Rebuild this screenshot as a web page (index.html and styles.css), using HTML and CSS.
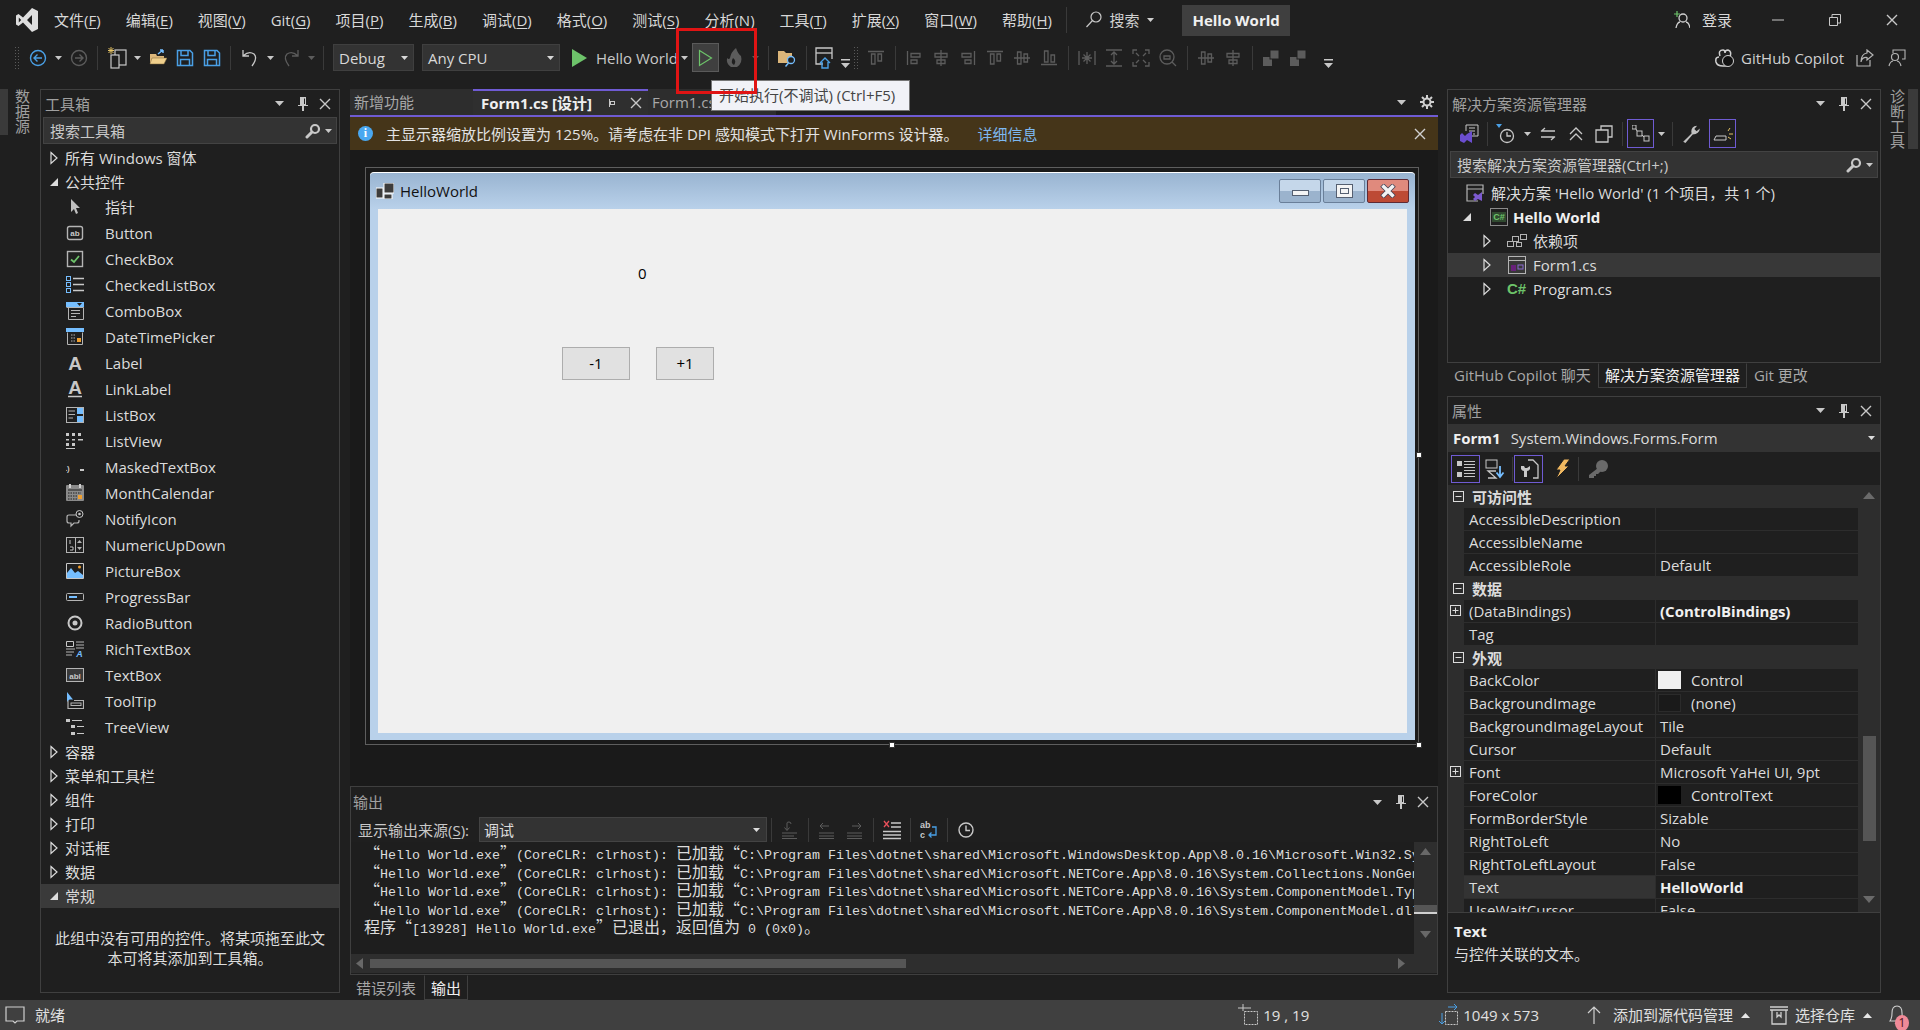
FILE: index.html
```html
<!DOCTYPE html>
<html lang="zh-CN">
<head>
    <meta charset="UTF-8">
    <title>Hello World - Microsoft Visual Studio</title>
    <link rel="stylesheet" href="styles.css">
</head>
<body>
<svg class="sprite" xmlns="http://www.w3.org/2000/svg">
    <symbol id="tri-open" viewBox="0 0 8 14"><path d="M1 1.5 7 7 1 12.5Z" fill="none" stroke="currentColor" stroke-width="1.2"/></symbol>
    <symbol id="tri-down" viewBox="0 0 8 14"><path d="M0 11 8 3V11Z" fill="currentColor"/></symbol>
    <symbol id="caret" viewBox="0 0 9 5"><path d="M0 0H9L4.500 5Z" fill="currentColor"/></symbol>
    <symbol id="pin" viewBox="0 0 12 16"><path d="M3 1H9V9H11V10H7V15H5V10H1V9H3ZM7 2.500V8H8V2.500Z" fill="currentColor"/></symbol>
    <symbol id="close" viewBox="0 0 12 12"><path d="M1 1 11 11M11 1 1 11" stroke="currentColor" stroke-width="1.400" fill="none"/></symbol>
    <symbol id="find" viewBox="0 0 16 16"><circle cx="10" cy="6" r="4" fill="none" stroke="currentColor" stroke-width="2.200"/><path d="M7 9 2 14" stroke="currentColor" stroke-width="3" stroke-linecap="round"/></symbol>
    <symbol id="folder" viewBox="0 0 18 18"><path d="M1 5H7L8 7H15V15H1Z" fill="#dcb67a"/><path d="M3 9H18L15 15H1Z" fill="#f0cf8c" stroke="#7a6236" stroke-width=".5"/><path d="M9 5 14 1M14 1H11M14 1V4" stroke="#75beff" stroke-width="1.500" fill="none"/></symbol>
    <symbol id="save" viewBox="0 0 18 18"><path d="M1.500 1.500H14L16.500 4V16.500H1.500Z" fill="none" stroke="#4aa0e6" stroke-width="1.500"/><path d="M5 2V6.500H12V2M4.500 16V10.500H13.500V16" fill="none" stroke="#4aa0e6" stroke-width="1.500"/></symbol>
    <symbol id="ab" viewBox="0 0 18 18"><rect x="1.500" y="2.500" width="15" height="13" rx="2" fill="none" stroke="#b4b4b4" stroke-width="1.400"/><text x="9" y="12" class="ico-t">ab</text></symbol>
    <symbol id="chk" viewBox="0 0 18 18"><rect x="1.500" y="1.500" width="15" height="15" fill="none" stroke="#b4b4b4" stroke-width="1.400"/><path d="M5 9.500 8 12 13 6" fill="none" stroke="#6dc36a" stroke-width="1.800"/></symbol>
    <symbol id="chklist" viewBox="0 0 18 18"><g fill="none" stroke="#75beff"><rect x=".5" y=".5" width="4" height="4"/><rect x=".5" y="6.500" width="4" height="4"/><rect x=".5" y="12.500" width="4" height="4"/></g><path d="M7 2.500H18M7 8.500H18M7 14.500H18" stroke="#c8c8c8" stroke-width="1.500"/></symbol>
    <symbol id="combo" viewBox="0 0 18 18"><path d="M.5 5.500H17.500V17.500H2.500V5.500" fill="none" stroke="#b4b4b4"/><path d="M0 0H18V5H0Z" fill="#75beff"/><path d="M5 8.500H14M5 11.500H14M5 14.500H10" stroke="#b4b4b4"/><path d="M11 1H16L13.500 4Z" fill="#1f1f1f"/></symbol>
    <symbol id="datet" viewBox="0 0 18 18"><path d="M1.500 4.500V16.500H16.500V4.500" fill="none" stroke="#b4b4b4"/><path d="M0 0H18V4H0Z" fill="#75beff"/><path d="M5 7H10M5 10H10M5 13H10" stroke="#b4b4b4" stroke-dasharray="1.500 1"/><rect x="11" y="10" width="4" height="4" fill="#f0a030"/></symbol>
    <symbol id="glyphA" viewBox="0 0 18 18"><text x="9" y="15.500" class="ico-a">A</text></symbol>
    <symbol id="glyphAl" viewBox="0 0 18 18"><text x="9" y="13.500" class="ico-a">A</text><path d="M2 16.500H16" stroke="#c8c8c8" stroke-width="1.500"/></symbol>
    <symbol id="listb" viewBox="0 0 18 18"><rect x=".5" y="1.500" width="17" height="15" fill="none" stroke="#b4b4b4"/><path d="M2.500 5H9M2.500 8.500H9M2.500 12H7" stroke="#b4b4b4"/><rect x="11" y="2" width="6" height="6" fill="#75beff"/><rect x="11" y="10" width="6" height="6" fill="#75beff"/></symbol>
    <symbol id="listv" viewBox="0 0 18 18"><g fill="#c8c8c8"><rect x="0" y="1" width="3" height="3"/><rect x="6" y="1" width="3" height="3"/><rect x="12" y="1" width="3" height="3"/><rect x="0" y="7" width="3" height="1.500"/><rect x="6" y="7" width="3" height="1.500"/><rect x="12" y="7" width="5" height="1.500"/><rect x="0" y="11" width="3" height="3"/><rect x="6" y="11" width="3" height="3"/><rect x="0" y="16" width="9" height="1"/></g></symbol>
    <symbol id="masked" viewBox="0 0 18 18"><text x="0" y="13" class="ico-t">(.)</text><rect x="14" y="11" width="4" height="2" fill="#c8c8c8"/></symbol>
    <symbol id="cal" viewBox="0 0 18 18"><rect y="1" width="18" height="16" rx="1" fill="#8a8a8a"/><path d="M2 6H16" stroke="#1f1f1f"/><path d="M2 9H15M2 12H15M2 15H11" stroke="#1f1f1f" stroke-dasharray="1.500 1"/><rect x="3" y="0" width="2" height="4" fill="#d0d0d0"/><rect x="13" y="0" width="2" height="4" fill="#d0d0d0"/><rect x="12" y="11" width="4" height="4" fill="#f0a030"/></symbol>
    <symbol id="notify" viewBox="0 0 18 18"><path d="M10 5H3Q1 5 1 7V11Q1 13 3 13H5V16L8 13H11Q13 13 13 11V10" fill="none" stroke="#b4b4b4" stroke-width="1.200"/><circle cx="13.500" cy="4" r="3.500" fill="none" stroke="#c8c8c8"/><circle cx="13.500" cy="4" r="1.300" fill="#c8c8c8"/></symbol>
    <symbol id="num" viewBox="0 0 18 18"><rect x=".5" y="1.500" width="17" height="15" fill="none" stroke="#b4b4b4"/><path d="M4 4V8M4 11H7V14H4" stroke="#c8c8c8"/><path d="M9.500 2V16" stroke="#b4b4b4"/><path d="M11 7H16L13.500 4ZM11 11H16L13.500 14Z" fill="#b4b4b4"/></symbol>
    <symbol id="pic" viewBox="0 0 18 18"><path d="M.5 1.500H17.500V16.500H.5Z" fill="#1f1f1f" stroke="#c8c8c8"/><path d="M1 16V11L5 6 9 11 12 9 17 13V16Z" fill="#75beff"/><circle cx="13.500" cy="5" r="1.500" fill="#f0a030"/></symbol>
    <symbol id="prog" viewBox="0 0 18 18"><rect x=".5" y="5.500" width="17" height="7" rx="1" fill="none" stroke="#b4b4b4"/><rect x="3" y="8" width="8" height="2" fill="#75beff"/></symbol>
    <symbol id="radio" viewBox="0 0 18 18"><circle cx="9" cy="9" r="6.500" fill="none" stroke="#c8c8c8" stroke-width="2"/><circle cx="9" cy="9" r="2.500" fill="#c8c8c8"/></symbol>
    <symbol id="rich" viewBox="0 0 18 18"><path d="M.5 1.500H7.500V6.500H.5Z" fill="none" stroke="#c8c8c8"/><path d="M10 2H18M10 5H18M10 8H18M0 9H9M0 12H8M0 15H6" stroke="#b4b4b4"/><text x="13.500" y="17" class="ico-b">A</text></symbol>
    <symbol id="abl" viewBox="0 0 18 18"><rect x=".5" y="2.500" width="17" height="13" fill="#3a3a3a" stroke="#b4b4b4"/><text x="9" y="12.500" class="ico-t">abl</text></symbol>
    <symbol id="tip" viewBox="0 0 18 18"><path d="M1 0V10L3.500 7.500H7Z" fill="#75beff"/><path d="M2 8.500V16.500H17.500V8.500H8" fill="none" stroke="#b4b4b4" stroke-width="1.200"/><rect x="5" y="11" width="10" height="2.500" fill="none" stroke="#b4b4b4"/></symbol>
    <symbol id="tree" viewBox="0 0 18 18"><g fill="#c8c8c8"><rect x="0" y="1" width="4" height="3"/><rect x="5" y="7" width="4" height="3"/><rect x="5" y="14" width="4" height="3"/><rect x="6" y="2" width="10" height="1"/><rect x="11" y="8" width="7" height="1"/><rect x="11" y="15" width="7" height="1"/></g></symbol>
    <symbol id="arrowp" viewBox="0 0 18 18"><path d="M5 1V14L8 11 10 16 12 15 10 10H14Z" fill="#c0c0c0"/></symbol>
    <symbol id="csproj" viewBox="0 0 18 18"><rect x=".5" y=".5" width="17" height="17" fill="none" stroke="#8a8a8a"/><rect x="2" y="4" width="14" height="10" fill="#304a30"/><text x="9" y="12" class="ico-c">C#</text></symbol>
    <symbol id="form" viewBox="0 0 18 18"><rect x=".5" y=".5" width="17" height="17" fill="none" stroke="#b4b4b4"/><path d="M1 4.500H17" stroke="#b4b4b4"/><rect x="3" y="9" width="5" height="6" fill="#68217a"/><rect x="10" y="9" width="5" height="4" fill="none" stroke="#8a6ad0"/></symbol>
    <symbol id="deps" viewBox="0 0 20 14"><g fill="none" stroke="#b4b4b4"><rect x=".5" y="7.500" width="6" height="5"/><rect x="5.500" y="2.500" width="6" height="5"/><rect x="9.500" y="8.500" width="5" height="4"/><rect x="13.500" y=".5" width="6" height="5"/></g></symbol>
    <symbol id="sln" viewBox="0 0 18 18"><path d="M12 17H1V1H17V10" fill="none" stroke="#b4b4b4" stroke-width="1.200"/><path d="M1 5H17" stroke="#b4b4b4"/><path d="M16 8V17L12 15 9 17 7 15 9 13 7 11 9 9 12 11Z" fill="#7c5ad0"/></symbol>
    <symbol id="clockic" viewBox="0 0 18 18"><circle cx="9" cy="9" r="7" fill="none" stroke="currentColor" stroke-width="1.400"/><path d="M9 4.500V9.500H13" fill="none" stroke="currentColor" stroke-width="1.400"/></symbol>
    <symbol id="wrench" viewBox="0 0 18 18"><path d="M2 16 9.500 8.500Q8.500 4 12 2L14.500 1.500 12 4.500 14 6.500 17 4Q16.500 9 10.500 9.500L4 17Z" fill="#c0c0c0"/></symbol>
    <symbol id="dalign" viewBox="0 0 18 18"><path d="M2.500 2V16M6 4.500H15V8H6ZM6 11H12V14.500H6Z" fill="none" stroke="currentColor" stroke-width="1.300"/></symbol>
    <symbol id="dcenter" viewBox="0 0 18 18"><path d="M9 1V17M3 4.500H15V8H3ZM5 11H13V14.500H5Z" fill="none" stroke="currentColor" stroke-width="1.300"/></symbol>
    <symbol id="dtop" viewBox="0 0 18 18"><path d="M1 2.500H17M4.500 5V15H8V5ZM11 5V12H14.500V5Z" fill="none" stroke="currentColor" stroke-width="1.300"/></symbol>
    <symbol id="dmid" viewBox="0 0 18 18"><path d="M1 9H17M4.500 3V15H8V3ZM11 5V13H14.500V5Z" fill="none" stroke="currentColor" stroke-width="1.300"/></symbol>
    <symbol id="dbot" viewBox="0 0 18 18"><path d="M1 15.500H17M4.500 2V13H8V2ZM11 6V13H14.500V6Z" fill="none" stroke="currentColor" stroke-width="1.300"/></symbol>
    <symbol id="dlayer" viewBox="0 0 18 18"><rect x="1" y="8" width="9" height="9" fill="currentColor"/><rect x="8" y="1" width="9" height="9" fill="currentColor" stroke="#1f1f1f"/></symbol>
    <symbol id="overflow" viewBox="0 0 9 9"><path d="M0 0H9V1.500H0ZM0 4H9L4.500 9Z" fill="currentColor"/></symbol>
    <symbol id="sq-plus" viewBox="0 0 11 11"><rect x=".5" y=".5" width="10" height="10" fill="none" stroke="currentColor"/><path d="M2.500 5.500H8.500M5.500 2.500V8.500" stroke="currentColor"/></symbol>
    <symbol id="sq-minus" viewBox="0 0 11 11"><rect x=".5" y=".5" width="10" height="10" fill="none" stroke="currentColor"/><path d="M2.500 5.500H8.500" stroke="currentColor"/></symbol>
</svg>

<header class="titlebar">
    <svg class="vs-logo" viewBox="0 0 24 26"><path fill-rule="evenodd" fill="#dedede" d="M17 1 23 4V22L17 25 8 15.500 3.500 19 1 17.500V8.500L3.500 7 8 10.500ZM17 8 12 13 17 18ZM3.800 10.500V15.500L6.200 13Z"/></svg>
    <nav class="menu">
        <span>文件(<u>F</u>)</span><span>编辑(<u>E</u>)</span><span>视图(<u>V</u>)</span><span>Git(<u>G</u>)</span><span>项目(<u>P</u>)</span><span>生成(<u>B</u>)</span><span>调试(<u>D</u>)</span><span>格式(<u>O</u>)</span><span>测试(<u>S</u>)</span><span>分析(<u>N</u>)</span><span>工具(<u>T</u>)</span><span>扩展(<u>X</u>)</span><span>窗口(<u>W</u>)</span><span>帮助(<u>H</u>)</span>
    </nav>
    <i class="title-sep"></i>
    <div class="title-search">
        <svg width="18" height="18" viewBox="0 0 18 18"><circle cx="11" cy="6" r="5" fill="none" stroke="#c8c8c8" stroke-width="1.200"/><path d="M7.500 9.500 1.500 16" stroke="#c8c8c8" stroke-width="1.200"/></svg>
        <span>搜索</span>
        <svg class="car" width="7" height="4"><use href="#caret"/></svg>
    </div>
    <div class="title-name">Hello World</div>
    <div class="title-right">
        <svg width="18" height="18" viewBox="0 0 18 18"><path d="M2 3H8M5 0V6" stroke="#6dc36a" stroke-width="1.200"/><circle cx="11" cy="7" r="4" fill="none" stroke="#d0d0d0" stroke-width="1.300"/><path d="M4 17Q5 11.500 8 11M18 17Q17 11.500 14 11" fill="none" stroke="#d0d0d0" stroke-width="1.300"/></svg>
        <span class="login">登录</span>
        <svg class="win" viewBox="0 0 12 12"><path d="M0 6H12" stroke="#c8c8c8"/></svg>
        <svg class="win" viewBox="0 0 12 12"><path d="M.5 3.500H8.500V11.500H.5ZM3 3.500V.5H11.500V9H8.500" fill="none" stroke="#c8c8c8"/></svg>
        <svg class="win" viewBox="0 0 12 12"><use href="#close"/></svg>
    </div>
</header>

<div class="toolbar">
    <i class="grip"></i>
    <span class="ti blue"><svg width="18" height="18" viewBox="0 0 18 18"><circle cx="9" cy="9" r="7.500" fill="none" stroke="#4aa0e6" stroke-width="1.400"/><path d="M13 9H5.500M8.500 5.500 5 9 8.500 12.500" fill="none" stroke="#4aa0e6" stroke-width="1.400"/></svg></span>
    <span class="cr"><svg width="7" height="4"><use href="#caret"/></svg></span>
    <span class="ti dim"><svg width="18" height="18" viewBox="0 0 18 18"><circle cx="9" cy="9" r="7.500" fill="none" stroke="currentColor" stroke-width="1.400"/><path d="M5 9H12.500M9.500 5.500 13 9 9.500 12.500" fill="none" stroke="currentColor" stroke-width="1.400"/></svg></span>
    <i class="sep"></i>
    <span class="ti"><svg width="20" height="22" viewBox="0 0 20 22"><path d="M4 0V7M1 3.500H7M1.500 1 6.500 6M6.500 1 1.500 6" stroke="#e5c365"/><rect x="8" y="3" width="11" height="15" fill="none" stroke="#c8c8c8" stroke-width="1.200"/><rect x="4" y="8" width="8" height="13" fill="#1f1f1f" stroke="#c8c8c8" stroke-width="1.200"/></svg></span>
    <span class="cr"><svg width="7" height="4"><use href="#caret"/></svg></span>
    <span class="ti"><svg width="18" height="18"><use href="#folder"/></svg></span>
    <span class="ti"><svg width="18" height="18"><use href="#save"/></svg></span>
    <span class="ti"><svg width="18" height="18"><use href="#save"/></svg></span>
    <i class="sep"></i>
    <span class="ti"><svg width="18" height="20" viewBox="0 0 18 20"><path d="M2 2V8H8M2.500 7.500Q8 2.500 13 6 17 10 11 18" fill="none" stroke="#c8c8c8" stroke-width="1.300"/></svg></span>
    <span class="cr"><svg width="7" height="4"><use href="#caret"/></svg></span>
    <span class="ti dim"><svg width="18" height="20" viewBox="0 0 18 20"><path d="M16 2V8H10M15.500 7.500Q10 2.500 5 6 1 10 7 18" fill="none" stroke="currentColor" stroke-width="1.300"/></svg></span>
    <span class="cr dim"><svg width="7" height="4"><use href="#caret"/></svg></span>
    <i class="sep"></i>
    <div class="combo combo-debug">Debug<svg width="7" height="4"><use href="#caret"/></svg></div>
    <div class="combo combo-cpu">Any CPU<svg width="7" height="4"><use href="#caret"/></svg></div>
    <svg class="play" width="15" height="18" viewBox="0 0 15 18"><path d="M0 0 15 9 0 18Z" fill="#6dc36a"/></svg>
    <span class="run-name">Hello World</span>
    <span class="cr"><svg width="7" height="4"><use href="#caret"/></svg></span>
    <span class="run-nodbg"><svg width="15" height="18" viewBox="0 0 15 18"><path d="M1.500 1.500 13.500 9 1.500 16.500Z" fill="none" stroke="#6dc36a" stroke-width="1.200"/></svg></span>
    <span class="ti flame dim"><svg width="18" height="20" viewBox="0 0 18 20"><path d="M11 0Q13 6 16 8 18 15 12 19H6Q1 16 2 10 4 12 5 10 6 4 11 0Z" fill="currentColor"/><path d="M8 10Q12 13 9 17 5 15 8 10Z" fill="#1f1f1f"/></svg></span>
    <span class="cr dim"><svg width="7" height="4"><use href="#caret"/></svg></span>
    <i class="sep"></i>
    <span class="ti"><svg width="20" height="20" viewBox="0 0 20 20"><path d="M1 3H7L9 5H15V15H1Z" fill="#dcb67a"/><circle cx="14" cy="12" r="3.500" fill="#1f1f1f" stroke="#75beff" stroke-width="1.300"/><path d="M11.500 15 8.500 18.500" stroke="#75beff" stroke-width="1.500"/></svg></span>
    <i class="sep"></i>
    <span class="ti"><svg width="20" height="22" viewBox="0 0 20 22"><path d="M8 17H1V1H17V12" fill="none" stroke="#c8c8c8" stroke-width="1.300"/><path d="M1 6H17" stroke="#c8c8c8" stroke-width="1.300"/><path d="M5 16 10 11 15 16M7 15V21H13V15" fill="none" stroke="#4aa0e6" stroke-width="1.400"/></svg></span>
    <span class="ov"><svg width="9" height="9"><use href="#overflow"/></svg></span>
    <i class="grip"></i>
    <span class="ti dim"><svg width="18" height="18"><use href="#dtop"/></svg></span>
    <i class="sep"></i>
    <span class="ti dim"><svg width="18" height="18"><use href="#dalign"/></svg></span>
    <span class="ti dim"><svg width="18" height="18"><use href="#dcenter"/></svg></span>
    <span class="ti dim flip"><svg width="18" height="18"><use href="#dalign"/></svg></span>
    <span class="ti dim"><svg width="18" height="18"><use href="#dtop"/></svg></span>
    <span class="ti dim"><svg width="18" height="18"><use href="#dmid"/></svg></span>
    <span class="ti dim"><svg width="18" height="18"><use href="#dbot"/></svg></span>
    <i class="sep"></i>
    <span class="ti dim"><svg width="18" height="18" viewBox="0 0 18 18"><path d="M1 2V16M17 2V16M9 3V15M4 9H14M5.500 5.500 12.500 12.500M12.500 5.500 5.500 12.500" stroke="currentColor" stroke-width="1.300"/></svg></span>
    <span class="ti dim"><svg width="18" height="18" viewBox="0 0 18 18"><path d="M1 1H17M1 17H17M9 3V15M6 6 9 3 12 6M6 12 9 15 12 12" fill="none" stroke="currentColor" stroke-width="1.300"/></svg></span>
    <span class="ti dim"><svg width="18" height="18" viewBox="0 0 18 18"><path d="M1 5V1H5M13 1H17V5M17 13V17H13M5 17H1V13M4 4 7 7M14 4 11 7M14 14 11 11M4 14 7 11" fill="none" stroke="currentColor" stroke-width="1.300"/></svg></span>
    <span class="ti dim"><svg width="18" height="18" viewBox="0 0 18 18"><circle cx="8" cy="8" r="7" fill="none" stroke="currentColor" stroke-width="1.300"/><path d="M13 13 17 17M5 7H11V10H5Z" fill="none" stroke="currentColor" stroke-width="1.300"/></svg></span>
    <i class="sep"></i>
    <span class="ti dim"><svg width="18" height="18"><use href="#dmid"/></svg></span>
    <span class="ti dim"><svg width="18" height="18"><use href="#dcenter"/></svg></span>
    <i class="sep"></i>
    <span class="ti dim"><svg width="18" height="18"><use href="#dlayer"/></svg></span>
    <span class="ti dim"><svg width="18" height="18"><use href="#dlayer"/></svg></span>
    <span class="ov dim-ov"><svg width="9" height="9"><use href="#overflow"/></svg></span>
    <div class="tool-right">
        <svg width="20" height="20" viewBox="0 0 20 20"><path d="M4 9Q0 9 1 14 2 18 8 18H12M5 8Q3 2 8 2 10 2 10 5 10 2 13 2 17 3 15 9" fill="none" stroke="#d0d0d0" stroke-width="1.500"/><circle cx="13" cy="13" r="5.500" fill="#111" stroke="#d0d0d0"/></svg>
        <span class="copilot">GitHub Copilot</span>
        <svg class="tr-share" width="18" height="18" viewBox="0 0 18 18"><path d="M1 6V17H14V11M11 1 17 6 11 11V8.500Q6 8 5 13 5 5 11 4Z" fill="none" stroke="#b4b4b4" stroke-width="1.200"/></svg>
        <svg class="tr-feed" width="18" height="18" viewBox="0 0 18 18"><path d="M5 4V1H17V10H14" fill="none" stroke="#b4b4b4" stroke-width="1.100"/><circle cx="7" cy="8" r="3.500" fill="none" stroke="#b4b4b4" stroke-width="1.200"/><path d="M1 17Q2 12.500 5 12M13 17Q12 12.500 9 12" fill="none" stroke="#b4b4b4" stroke-width="1.200"/></svg>
    </div>
</div>

<main class="workspace">
    <div class="strip strip-left"><i class="strip-mark"></i><span class="vtext">数据源</span></div>

    <section class="panel toolbox">
        <div class="panel-head">
            <span>工具箱</span>
            <div class="panel-btns">
                <svg class="b-caret"><use href="#caret"/></svg>
                <svg class="b-pin"><use href="#pin"/></svg>
                <svg class="b-close"><use href="#close"/></svg>
            </div>
        </div>
        <div class="search">搜索工具箱<span class="search-ic"><svg width="16" height="16"><use href="#find"/></svg><svg width="7" height="4"><use href="#caret"/></svg></span></div>
        <div class="tb-cat"><svg class="tw"><use href="#tri-open"/></svg>所有 Windows 窗体</div>
        <div class="tb-cat"><svg class="tw"><use href="#tri-down"/></svg>公共控件</div>
        <ul class="tb-list">
            <li><svg><use href="#arrowp"/></svg>指针</li>
            <li><svg><use href="#ab"/></svg>Button</li>
            <li><svg><use href="#chk"/></svg>CheckBox</li>
            <li><svg><use href="#chklist"/></svg>CheckedListBox</li>
            <li><svg><use href="#combo"/></svg>ComboBox</li>
            <li><svg><use href="#datet"/></svg>DateTimePicker</li>
            <li><svg><use href="#glyphA"/></svg>Label</li>
            <li><svg><use href="#glyphAl"/></svg>LinkLabel</li>
            <li><svg><use href="#listb"/></svg>ListBox</li>
            <li><svg><use href="#listv"/></svg>ListView</li>
            <li><svg><use href="#masked"/></svg>MaskedTextBox</li>
            <li><svg><use href="#cal"/></svg>MonthCalendar</li>
            <li><svg><use href="#notify"/></svg>NotifyIcon</li>
            <li><svg><use href="#num"/></svg>NumericUpDown</li>
            <li><svg><use href="#pic"/></svg>PictureBox</li>
            <li><svg><use href="#prog"/></svg>ProgressBar</li>
            <li><svg><use href="#radio"/></svg>RadioButton</li>
            <li><svg><use href="#rich"/></svg>RichTextBox</li>
            <li><svg><use href="#abl"/></svg>TextBox</li>
            <li><svg><use href="#tip"/></svg>ToolTip</li>
            <li><svg><use href="#tree"/></svg>TreeView</li>
        </ul>
        <div class="tb-cat"><svg class="tw"><use href="#tri-open"/></svg>容器</div>
        <div class="tb-cat"><svg class="tw"><use href="#tri-open"/></svg>菜单和工具栏</div>
        <div class="tb-cat"><svg class="tw"><use href="#tri-open"/></svg>组件</div>
        <div class="tb-cat"><svg class="tw"><use href="#tri-open"/></svg>打印</div>
        <div class="tb-cat"><svg class="tw"><use href="#tri-open"/></svg>对话框</div>
        <div class="tb-cat"><svg class="tw"><use href="#tri-open"/></svg>数据</div>
        <div class="tb-cat tb-cat-sel"><svg class="tw"><use href="#tri-down"/></svg>常规</div>
        <p class="tb-empty">此组中没有可用的控件。将某项拖至此文本可将其添加到工具箱。</p>
    </section>

    <section class="center">
        <div class="doc-tabs">
            <div class="dtab">新增功能</div>
            <div class="dtab dtab-on">Form1.cs [设计]
                <svg class="dt-pin" width="12" height="12" viewBox="0 0 12 12"><path d="M1 6H4M4 2V10H5V8H10V4H5V2ZM6 5H9V7H6Z" fill="#c8c8c8"/></svg>
                <svg class="dt-x" width="12" height="12"><use href="#close"/></svg>
            </div>
            <div class="dtab dtab-3">Form1.cs<svg class="dt-x" width="12" height="12"><use href="#close"/></svg></div>
            <div class="doc-tools">
                <svg width="9" height="5"><use href="#caret"/></svg>
                <svg width="14" height="14" viewBox="0 0 14 14"><circle cx="7" cy="7" r="3.500" fill="none" stroke="#d0d0d0" stroke-width="2"/><path d="M7 0V3M7 11V14M0 7H3M11 7H14M2 2 4 4M10 10 12 12M12 2 10 4M4 10 2 12" stroke="#d0d0d0" stroke-width="2"/></svg>
            </div>
        </div>
        <div class="infobar">
            <span class="info-ic">i</span>
            <span>主显示器缩放比例设置为 125%。请考虑在非 DPI 感知模式下打开 WinForms 设计器。</span>
            <a class="info-link">详细信息</a>
            <svg class="info-x" width="12" height="12"><use href="#close"/></svg>
        </div>
        <div class="designer">
            <div class="sel-box">
                <div class="form">
                    <div class="form-title">
                        <svg width="18" height="16" viewBox="0 0 18 16"><rect x="8" y="0" width="10" height="10" fill="#3d3d3d" stroke="#fff"/><rect x="0" y="5" width="7" height="10" fill="#3d3d3d" stroke="#fff"/><rect x="8" y="11" width="8" height="5" fill="#3d3d3d" stroke="#fff"/></svg>
                        <span>HelloWorld</span>
                        <div class="form-btns">
                            <span class="fb"><i class="fb-min"></i></span>
                            <span class="fb"><i class="fb-max"></i></span>
                            <span class="fb fb-close"><svg width="18" height="14" viewBox="0 0 18 14"><path d="M3 1 15 13M15 1 3 13" stroke="#445" stroke-width="5"/><path d="M3.500 1.500 14.500 12.500M14.500 1.500 3.500 12.500" stroke="#f2f2f2" stroke-width="3.400"/></svg></span>
                        </div>
                    </div>
                    <div class="form-client">
                        <span class="ctl-label">0</span>
                        <span class="ctl-btn ctl-minus">-1</span>
                        <span class="ctl-btn ctl-plus">+1</span>
                    </div>
                </div>
            </div>
            <i class="handle h-right"></i>
            <i class="handle h-bottom"></i>
            <i class="handle h-corner"></i>
        </div>
        <div class="panel output">
            <div class="panel-head">
                <span>输出</span>
                <div class="panel-btns">
                    <svg class="b-caret"><use href="#caret"/></svg>
                    <svg class="b-pin"><use href="#pin"/></svg>
                    <svg class="b-close"><use href="#close"/></svg>
                </div>
            </div>
            <div class="out-tools">
                <span class="out-label">显示输出来源(<u>S</u>):</span>
                <div class="out-combo">调试<svg width="7" height="4"><use href="#caret"/></svg></div>
                <i class="sep"></i>
                <span class="oi dim"><svg width="18" height="18" viewBox="0 0 18 18"><path d="M1 12H16M1 15H13M1 17.500H16" stroke="currentColor"/><path d="M6 9V2Q6 1 8 1 10 1 10 3M3.500 6.500 6 9.500 8.500 6.500" fill="none" stroke="currentColor"/></svg></span>
                <i class="sep"></i>
                <span class="oi dim"><svg width="18" height="18" viewBox="0 0 18 18"><path d="M1 12H16M1 15H16M1 17.500H16" stroke="currentColor"/><path d="M11 5H2M5 2 2 5 5 8" fill="none" stroke="currentColor"/></svg></span>
                <span class="oi dim"><svg width="18" height="18" viewBox="0 0 18 18"><path d="M1 12H16M1 15H16M1 17.500H16" stroke="currentColor"/><path d="M6 5H15M12 2 15 5 12 8" fill="none" stroke="currentColor"/></svg></span>
                <i class="sep"></i>
                <span class="oi"><svg width="18" height="20" viewBox="0 0 18 20"><path d="M8 3H18M8 7H18M0 11.500H18M0 15H18M0 18.500H18" stroke="#c8c8c8" stroke-width="1.300"/><path d="M1 1 6 7M6 1 1 7" stroke="#e8505b" stroke-width="1.300"/></svg></span>
                <i class="sep"></i>
                <span class="oi"><svg width="18" height="20" viewBox="0 0 18 20"><text x="0" y="8" class="ico-s">ab</text><text x="0" y="18" class="ico-s">c</text><path d="M12 7H16V15H9M11.500 12.500 9 15 11.500 17.500" fill="none" stroke="#4aa0e6" stroke-width="1.300"/></svg></span>
                <i class="sep"></i>
                <span class="oi"><svg width="18" height="18"><use href="#clockic"/></svg></span>
            </div>
            <div class="out-body">
                <div class="out-text">
                    <div><span class="c">“</span>Hello World.exe<span class="c">”</span>(CoreCLR: clrhost): <span class="c">已加载“</span>C:\Program Files\dotnet\shared\Microsoft.WindowsDesktop.App\8.0.16\Microsoft.Win32.SystemEvents.dll</div>
                    <div><span class="c">“</span>Hello World.exe<span class="c">”</span>(CoreCLR: clrhost): <span class="c">已加载“</span>C:\Program Files\dotnet\shared\Microsoft.NETCore.App\8.0.16\System.Collections.NonGeneric.dll</div>
                    <div><span class="c">“</span>Hello World.exe<span class="c">”</span>(CoreCLR: clrhost): <span class="c">已加载“</span>C:\Program Files\dotnet\shared\Microsoft.NETCore.App\8.0.16\System.ComponentModel.TypeConverter.dll</div>
                    <div><span class="c">“</span>Hello World.exe<span class="c">”</span>(CoreCLR: clrhost): <span class="c">已加载“</span>C:\Program Files\dotnet\shared\Microsoft.NETCore.App\8.0.16\System.ComponentModel.dll</div>
                    <div><span class="c">程序“</span>[13928] Hello World.exe<span class="c">”已退出，返回值为</span> 0 (0x0)<span class="c">。</span></div>
                </div>
                <div class="out-vbar">
                    <svg width="11" height="7" viewBox="0 0 11 7"><path d="M0 7H11L5.500 0Z" fill="#686868"/></svg>
                    <i class="vthumb"></i>
                    <svg width="11" height="7" viewBox="0 0 11 7"><path d="M0 0H11L5.500 7Z" fill="#686868"/></svg>
                </div>
                <div class="out-hbar">
                    <svg width="7" height="11" viewBox="0 0 7 11"><path d="M7 0V11L0 5.500Z" fill="#686868"/></svg>
                    <i class="hthumb"></i>
                    <svg class="hright" width="7" height="11" viewBox="0 0 7 11"><path d="M0 0V11L7 5.500Z" fill="#686868"/></svg>
                </div>
            </div>
        </div>
        <div class="bot-tabs">
            <span class="btab">错误列表</span>
            <span class="btab btab-on">输出</span>
        </div>
    </section>

    <section class="rightcol">
        <div class="panel solution">
            <div class="panel-head">
                <span>解决方案资源管理器</span>
                <div class="panel-btns">
                    <svg class="b-caret"><use href="#caret"/></svg>
                    <svg class="b-pin"><use href="#pin"/></svg>
                    <svg class="b-close"><use href="#close"/></svg>
                </div>
            </div>
            <div class="sol-tools">
                <span class="si si-first"><svg width="20" height="20" viewBox="0 0 20 20"><path d="M7 7V1H19V12H13" fill="none" stroke="#c8c8c8"/><path d="M10 4H16M10 7H16M14 10H16" stroke="#c8c8c8"/><path d="M13 7V19L8 16 5 19 1 17V11L3 9 6 12 8 10Z" fill="#6b4ed0"/></svg></span>
                <i class="sep"></i>
                <span class="si si-clock"><svg width="20" height="20" viewBox="0 0 20 20"><path d="M0 0H6L3 4Z" fill="#4aa0e6"/><circle cx="11" cy="12" r="6.500" fill="none" stroke="#c8c8c8" stroke-width="1.300"/><path d="M11 8V12H15" fill="none" stroke="#c8c8c8" stroke-width="1.300"/></svg></span>
                <span class="cr"><svg width="7" height="4"><use href="#caret"/></svg></span>
                <span class="si"><svg width="16" height="14" viewBox="0 0 16 14"><path d="M15 4H2M5 1 1 4.500M1 10H14M11 13 15 9.500" fill="none" stroke="#c8c8c8" stroke-width="1.300"/></svg></span>
                <span class="si"><svg width="14" height="14" viewBox="0 0 14 14"><path d="M1 7 7 1 13 7M1 13 7 7 13 13" fill="none" stroke="#c8c8c8" stroke-width="1.300"/></svg></span>
                <span class="si"><svg width="18" height="18" viewBox="0 0 18 18"><path d="M6 5V1H17V12H13" fill="none" stroke="#c8c8c8" stroke-width="1.300"/><path d="M1 5H13V17H1Z" fill="none" stroke="#c8c8c8" stroke-width="1.300"/></svg></span>
                <i class="sep"></i>
                <span class="si si-box"><svg width="18" height="18" viewBox="0 0 18 18"><rect x="0" y="0" width="4" height="4" fill="none" stroke="#c8c8c8"/><rect x="5" y="6" width="5" height="5" fill="none" stroke="#c8c8c8"/><rect x="12" y="11" width="5" height="5" fill="none" stroke="#c8c8c8"/><path d="M4 4 5 6M10 10 12 12" stroke="#c8c8c8"/></svg></span>
                <span class="cr"><svg width="7" height="4"><use href="#caret"/></svg></span>
                <i class="sep"></i>
                <span class="si"><svg width="20" height="20"><use href="#wrench"/></svg></span>
                <span class="si si-box si-box2"><svg width="20" height="14" viewBox="0 0 20 14"><path d="M1 13H13V9H3Z" fill="none" stroke="#c8c8c8"/><path d="M15 4 17 1M16 7H20M15 10 18 12" stroke="#e5c365"/></svg></span>
            </div>
            <div class="search search-sol">搜索解决方案资源管理器(Ctrl+;)<span class="search-ic"><svg width="16" height="16"><use href="#find"/></svg><svg width="7" height="4"><use href="#caret"/></svg></span></div>
            <div class="sol-row lv0"><svg class="ic"><use href="#sln"/></svg>解决方案 'Hello World' (1 个项目，共 1 个)</div>
            <div class="sol-row lv1"><svg class="tw"><use href="#tri-down"/></svg><svg class="ic"><use href="#csproj"/></svg><b>Hello World</b></div>
            <div class="sol-row lv2"><svg class="tw"><use href="#tri-open"/></svg><svg class="ic ic-w"><use href="#deps"/></svg>依赖项</div>
            <div class="sol-row lv2 sol-sel"><svg class="tw"><use href="#tri-open"/></svg><svg class="ic ic-w"><use href="#form"/></svg>Form1.cs</div>
            <div class="sol-row lv2"><svg class="tw"><use href="#tri-open"/></svg><span class="cs-ic">C#</span>Program.cs</div>
        </div>
        <div class="side-tabs">
            <span class="stab">GitHub Copilot 聊天</span>
            <span class="stab stab-on">解决方案资源管理器</span>
            <span class="stab">Git 更改</span>
        </div>
        <div class="panel props">
            <div class="panel-head">
                <span>属性</span>
                <div class="panel-btns">
                    <svg class="b-caret"><use href="#caret"/></svg>
                    <svg class="b-pin"><use href="#pin"/></svg>
                    <svg class="b-close"><use href="#close"/></svg>
                </div>
            </div>
            <div class="prop-obj"><b>Form1</b><span>System.Windows.Forms.Form</span><svg width="7" height="4"><use href="#caret"/></svg></div>
            <div class="prop-tools">
                <span class="pb pb-on"><svg width="18" height="18" viewBox="0 0 18 18"><rect x="0" y="1" width="5" height="5" fill="#c8c8c8"/><rect x="0" y="12" width="5" height="5" fill="#c8c8c8"/><path d="M7 1.500H18M7 4.500H18M7 7.500H18M7 10.500H18M7 13.500H18M7 16.500H18" stroke="#c8c8c8"/></svg></span>
                <span class="pb"><svg width="20" height="20" viewBox="0 0 20 20"><rect x="1" y="1" width="11" height="8" fill="none" stroke="#c8c8c8"/><path d="M3 19H11L3 12H11" fill="none" stroke="#c8c8c8" stroke-width="1.300"/><path d="M15 7V17M11.500 13.500 15 18 18.500 13.500" fill="none" stroke="#75beff" stroke-width="1.800"/></svg></span>
                <i class="sep"></i>
                <span class="pb pb-on"><svg width="20" height="20" viewBox="0 0 20 20"><path d="M9 1H14L19 6V19H14" fill="none" stroke="#c8c8c8" stroke-width="1.300"/><path d="M2 7 2 10Q3 12 5 12V18H8V12Q10 12 11 10V7L8 9 6 9 5 7Z" fill="#c8c8c8"/></svg></span>
                <span class="pb pb-plain"><svg width="20" height="20" viewBox="0 0 20 20"><path d="M13 0H19L14 7H18L5 20 9 11H5Z" fill="#f0b860" stroke="#1f1f1f"/></svg></span>
                <i class="sep"></i>
                <span class="pb pb-plain"><svg width="22" height="20" viewBox="0 0 22 20"><circle cx="15" cy="7" r="6" fill="#6a6a6a"/><path d="M11 9 2 16V19H7V17H9V15H11L14 12Z" fill="#6a6a6a"/></svg></span>
            </div>
            <div class="prop-grid">
                <div class="prop-list">
                    <div class="pcat"><svg><use href="#sq-minus"/></svg>可访问性</div>
                    <div class="prow"><span>AccessibleDescription</span><span></span></div>
                    <div class="prow"><span>AccessibleName</span><span></span></div>
                    <div class="prow"><span>AccessibleRole</span><span>Default</span></div>
                    <div class="pcat"><svg><use href="#sq-minus"/></svg>数据</div>
                    <div class="prow"><svg class="pexp"><use href="#sq-plus"/></svg><span>(DataBindings)</span><span class="pbold">(ControlBindings)</span></div>
                    <div class="prow"><span>Tag</span><span></span></div>
                    <div class="pcat"><svg><use href="#sq-minus"/></svg>外观</div>
                    <div class="prow"><span>BackColor</span><span class="pval-sw"><i class="sw sw-ctl"></i>Control</span></div>
                    <div class="prow"><span>BackgroundImage</span><span class="pval-sw"><i class="sw sw-none"></i>(none)</span></div>
                    <div class="prow"><span>BackgroundImageLayout</span><span>Tile</span></div>
                    <div class="prow"><span>Cursor</span><span>Default</span></div>
                    <div class="prow"><svg class="pexp"><use href="#sq-plus"/></svg><span>Font</span><span>Microsoft YaHei UI, 9pt</span></div>
                    <div class="prow"><span>ForeColor</span><span class="pval-sw"><i class="sw sw-blk"></i>ControlText</span></div>
                    <div class="prow"><span>FormBorderStyle</span><span>Sizable</span></div>
                    <div class="prow"><span>RightToLeft</span><span>No</span></div>
                    <div class="prow"><span>RightToLeftLayout</span><span>False</span></div>
                    <div class="prow prow-sel"><span>Text</span><span class="pbold">HelloWorld</span></div>
                    <div class="prow"><span>UseWaitCursor</span><span>False</span></div>
                </div>
                <div class="prop-bar">
                    <svg width="12" height="7" viewBox="0 0 12 7"><path d="M0 7H12L6 0Z" fill="#6a6a6a"/></svg>
                    <i class="pthumb"></i>
                    <svg width="12" height="7" viewBox="0 0 12 7"><path d="M0 0H12L6 7Z" fill="#6a6a6a"/></svg>
                </div>
            </div>
            <div class="prop-desc">
                <b>Text</b>
                <p>与控件关联的文本。</p>
            </div>
        </div>
    </section>

    <div class="strip strip-right"><span class="vtext">诊断工具</span><i class="strip-mark"></i></div>
</main>

<footer class="statusbar">
    <svg class="st-msg" width="20" height="20" viewBox="0 0 20 20"><path d="M1 2H19V16H12L10 18 8 16H1Z" fill="none" stroke="#d0d0d0" stroke-width="1.200"/></svg>
    <span class="st-ready">就绪</span>
    <div class="st-right">
        <svg width="22" height="22" viewBox="0 0 22 22"><path d="M5 0V7M0 4H13" stroke="#c8c8c8"/><rect x="6.500" y="7.500" width="13" height="13" fill="none" stroke="#c8c8c8" stroke-dasharray="2 1"/></svg>
        <span class="st-pos">19 , 19</span>
        <svg width="20" height="22" viewBox="0 0 20 22"><path d="M9 3H18M15 0 18 3 15 6" fill="none" stroke="#4aa0e6"/><path d="M3 9V20M0 17 3 20 6 17" fill="none" stroke="#4aa0e6"/><rect x="6.500" y="7.500" width="12" height="13" fill="none" stroke="#c8c8c8" stroke-dasharray="2 1"/></svg>
        <span class="st-size">1049 x 573</span>
        <svg width="14" height="20" viewBox="0 0 14 20"><path d="M7 19V2M1 8 7 2 13 8" fill="none" stroke="#d0d0d0" stroke-width="1.200"/></svg>
        <span class="st-src">添加到源代码管理</span>
        <svg class="st-up" width="9" height="5" viewBox="0 0 9 5"><path d="M0 5H9L4.500 0Z" fill="#e6e6e6"/></svg>
        <svg class="st-repo" width="18" height="20" viewBox="0 0 18 20"><path d="M0 2H18M0 5H18" stroke="#d0d0d0" stroke-width="1.600"/><path d="M2 5V19H16V5M7 7V12L9 10 11 12V7" fill="none" stroke="#d0d0d0" stroke-width="1.300"/></svg>
        <span class="st-repo-t">选择仓库</span>
        <svg class="st-up" width="9" height="5" viewBox="0 0 9 5"><path d="M0 5H9L4.500 0Z" fill="#e6e6e6"/></svg>
        <span class="st-bell">
            <svg width="18" height="22" viewBox="0 0 18 22"><path d="M2 17Q4 14 4 9 4 2 9 2 14 2 14 9 14 14 16 17ZM7 19Q9 21 11 19" fill="none" stroke="#d0d0d0" stroke-width="1.100"/></svg>
            <span class="st-badge">1</span>
        </span>
    </div>
</footer>

<div class="tooltip">开始执行(不调试) (Ctrl+F5)</div>
<div class="redbox"></div>
</body>
</html>
```
FILE: styles.css
```css
* {
    box-sizing: border-box;
}

html, body {
    margin: 0;
    padding: 0;
    height: 1030px;
    overflow: hidden;
}

body {
    position: relative;
    display: flex;
    flex-direction: column;
    width: 1920px;
    background-color: #1f1f1f;
    color: #dcdcdc;
    font-family: "Open Sans", "Noto Sans CJK SC", sans-serif;
    font-size: 15px;
    line-height: 20px;
}

.sprite {
    display: none;
}

u {
    text-underline-offset: 2px;
}

i {
    display: block;
}

svg {
    flex: none;
    display: block;
}

/* text inside the little control icons */
.ico-t { font: 700 8px "Liberation Sans", sans-serif; fill: #c8c8c8; text-anchor: middle; }
.ico-a { font: 700 19px "Liberation Sans", sans-serif; fill: #c8c8c8; text-anchor: middle; }
.ico-b { font: italic 700 9px "Liberation Sans", sans-serif; fill: #75beff; text-anchor: middle; }
.ico-c { font: 700 9px "Liberation Sans", sans-serif; fill: #6dc36a; text-anchor: middle; }
.ico-s { font: 700 9px "Liberation Sans", sans-serif; fill: #c8c8c8; }
.masked-t { fill: #c8c8c8; }

/* title bar */
.titlebar {
    display: flex;
    align-items: center;
    height: 40px;
    flex: none;
}

.vs-logo {
    width: 24px;
    height: 26px;
    margin-left: 15px;
}

.menu {
    display: flex;
    margin-left: 2.500px;
    white-space: nowrap;
    color: #d8d8d8;
}

.menu span {
    padding: 0 12.500px;
}

.title-sep {
    width: 1px;
    height: 26px;
    margin-left: 2px;
    background-color: #3a3a3a;
}

.title-search {
    display: flex;
    align-items: center;
    margin-left: 18px;
    color: #d0d0d0;
}

.title-search span {
    margin: 0 8px 0 6px;
}

.title-name {
    margin-left: 28px;
    padding: 0 10px;
    height: 31px;
    line-height: 31px;
    background-color: #3f3f3f;
    color: #f0f0f0;
    font-weight: 700;
}

.title-right {
    display: flex;
    align-items: center;
    margin-left: auto;
    padding-right: 22px;
}

.login {
    margin: 0 40px 0 12px;
    color: #d8d8d8;
}

.win {
    width: 12px;
    height: 12px;
    margin-left: 0;
    margin-right: 45px;
    color: #c8c8c8;
}

.win:last-child {
    margin-right: 0;
}

/* main toolbar */
.toolbar {
    display: flex;
    align-items: center;
    height: 35px;
    flex: none;
    padding-left: 14px;
    color: #c8c8c8;
}

.grip {
    width: 6px;
    height: 24px;
    background-image: radial-gradient(#5a5a5a 1px, transparent 1px);
    background-size: 3px 3px;
}

.ti, .cr, .oi, .si, .pb {
    display: flex;
    align-items: center;
    justify-content: center;
    flex: none;
}

.ti {
    width: 27px;
    height: 30px;
}

.cr {
    width: 14px;
    height: 30px;
    color: #c8c8c8;
}

.toolbar .grip + .ti { margin-left: 4px; }

.dim, .cr.dim {
    color: #5c5c5c;
}

.flip {
    transform: scaleX(-1);
}

.sep {
    width: 1px;
    height: 24px;
    margin: 0 5px;
    background-color: #3a3a3a;
    flex: none;
}

.combo {
    display: flex;
    align-items: center;
    justify-content: space-between;
    height: 27px;
    padding: 0 5px;
    background-color: #333;
    border: 1px solid #3f3f3f;
    color: #d8d8d8;
}

.combo-debug { width: 81px; margin-left: 4px; }
.combo-cpu { width: 138px; margin-left: 8px; }

.play { margin-left: 12px; }

.run-name {
    margin-left: 9px;
    color: #c8c8c8;
    white-space: nowrap;
}

.run-nodbg {
    display: flex;
    align-items: center;
    justify-content: center;
    width: 27px;
    height: 29px;
    background-color: #3f3f3f;
    border: 1px solid #5a5a5a;
}

.flame { width: 30px; }

.ov {
    width: 14px;
    margin-top: 12px;
    display: flex;
    justify-content: center;
}

.dim-ov { margin-left: 10px; }

.tool-right {
    display: flex;
    align-items: center;
    margin-left: auto;
    padding-right: 14px;
}

.copilot {
    margin: 0 12px 0 6px;
    color: #d0d0d0;
    white-space: nowrap;
}

.tr-feed { margin-left: 14px; }

/* workspace */
.workspace {
    display: flex;
    flex: 1;
    min-height: 0;
    padding-top: 14px;
}

.strip {
    display: flex;
    align-items: flex-start;
    width: 40px;
    flex: none;
    color: #a0a0a0;
}

.strip-right {
    width: 39px;
    padding-left: 0;
}

.strip-mark {
    width: 8px;
    height: 46px;
    background-color: #3a3a3a;
}

.strip-left .vtext { margin-left: 6px; }
.strip-right .vtext { margin-left: 8px; }
.strip-right .strip-mark { margin-left: 3px; height: 60px; width: 10px; }

.vtext {
    writing-mode: vertical-rl;
    font-size: 15px;
    line-height: 16px;
    letter-spacing: 0;
}

.panel {
    border: 1px solid #3f3f3f;
    background-color: #1f1f1f;
}

.panel-head {
    display: flex;
    align-items: center;
    justify-content: space-between;
    height: 27px;
    padding-left: 4px;
    color: #a0a0a0;
}

.panel-btns {
    display: flex;
    align-items: center;
    color: #c8c8c8;
}

.b-caret { width: 9px; height: 5px; margin-right: 13px; }
.b-pin { width: 12px; height: 16px; margin-right: 10px; }
.b-close { width: 12px; height: 12px; margin-right: 8px; }

.search {
    display: flex;
    align-items: center;
    justify-content: space-between;
    height: 27px;
    margin: 0 2px;
    padding: 0 4px 0 6px;
    background-color: #333;
    border: 1px solid #434343;
    color: #c8c8c8;
}

.search-ic {
    display: flex;
    align-items: center;
    gap: 4px;
}

.toolbox {
    width: 300px;
    height: 904px;
    flex: none;
}

.tw {
    width: 8px;
    height: 14px;
    flex: none;
    color: #dcdcdc;
}

.tb-cat {
    display: flex;
    align-items: center;
    height: 24px;
    padding-left: 9px;
    white-space: nowrap;
}

.tb-cat .tw {
    margin-right: 7px;
}

.tb-cat:nth-of-type(n) { margin: 0; }

.search + .tb-cat { margin-top: 2px; }

.tb-cat-sel {
    margin-right: 2px;
    background-color: #3a3a3a;
}

.tb-list {
    list-style: none;
    margin: 0;
    padding: 0;
}

.tb-list li {
    display: flex;
    align-items: center;
    height: 26px;
    padding-left: 25px;
}

.tb-list svg {
    width: 18px;
    height: 18px;
    margin-right: 21px;
}

.tb-empty {
    margin: 20px 0 0;
    padding: 0 10px;
    text-align: center;
    color: #dcdcdc;
}

/* editor area */
.center {
    display: flex;
    flex-direction: column;
    width: 1088px;
    margin: 0 9px 0 10px;
    flex: none;
}

.doc-tabs {
    display: flex;
    height: 28px;
    flex: none;
    border-bottom: 2px solid #6f5bd3;
}

.dtab {
    display: flex;
    align-items: center;
    height: 26px;
    padding-left: 4px;
    background-color: #2d2d2d;
    color: #a8a8a8;
    white-space: nowrap;
}

.dtab:first-child { width: 123px; }

.dtab-on {
    width: 175px;
    padding-left: 8px;
    background-color: #2f2f2f;
    border-top: 2px solid #6f5bd3;
    color: #f0f0f0;
    font-weight: 700;
}

.dtab-3 {
    width: 128px;
    color: #a8a8a8;
}

.dt-pin { margin-left: 13px; }
.dt-x { margin-left: 13px; color: #c8c8c8; }

.dtab-3 .dt-x { margin-left: 44px; }

.doc-tools {
    display: flex;
    align-items: center;
    gap: 14px;
    margin-left: auto;
    padding-right: 4px;
    height: 26px;
    color: #c8c8c8;
}

.infobar {
    display: flex;
    align-items: center;
    height: 33px;
    flex: none;
    padding-left: 8px;
    background-color: #453519;
    color: #e2e2e2;
}

.info-ic {
    width: 15px;
    height: 15px;
    margin-right: 13px;
    border-radius: 50%;
    background-color: #4aa8f0;
    color: #fff;
    font: 700 12px/15px "Liberation Serif", serif;
    text-align: center;
}

.info-link {
    margin-left: 19px;
    color: #7db8f0;
}

.info-x {
    margin-left: auto;
    margin-right: 12px;
    color: #d0d0d0;
}

.designer {
    position: relative;
    flex: 1;
    min-height: 0;
    padding: 17px 19px 30px 15px;
    background-color: #1a1a1a;
}

.sel-box {
    height: 578px;
    padding: 4px 3px 4px 4px;
    border: 1px solid #5e5e5e;
}

.form {
    display: flex;
    flex-direction: column;
    height: 100%;
    padding: 0 8px 7px;
    background-color: #b9d1ea;
    border-top: 1px solid #fff;
    border-radius: 4px 4px 0 0;
    background-image: linear-gradient(#99b4d1, #b9d1ea 36px);
    color: #111;
}

.form-title {
    display: flex;
    align-items: center;
    height: 36px;
    flex: none;
    margin-right: -2px;
    margin-left: -2px;
}

.form-title span { margin-left: 6px; }

.form-btns {
    display: flex;
    gap: 2px;
    margin-left: auto;
}

.form-title .fb {
    display: flex;
    align-items: center;
    justify-content: center;
    width: 42px;
    height: 24px;
    margin-left: 0;
    border: 1px solid #6a7f99;
    border-radius: 2px;
    background-image: linear-gradient(#c5d7ea 50%, #9bb3cd 50%);
}

.form-title .fb-close {
    border-color: #5e2a35;
    background-image: linear-gradient(#e08a7d 50%, #bd4a35 50%);
}

.fb-min {
    width: 17px;
    height: 6px;
    background-color: #f4f4f4;
    border: 1px solid #555f70;
    margin-top: 3px;
}

.fb-max {
    width: 17px;
    height: 14px;
    background-color: #f4f4f4;
    border: 1px solid #555f70;
    box-shadow: inset 0 0 0 3px #f4f4f4, inset 0 0 0 4px #555f70;
}

.form-client {
    position: relative;
    flex: 1;
    background-color: #f0f0f0;
}

.ctl-label {
    position: absolute;
    left: 260px;
    top: 54px;
    color: #000;
}

.ctl-btn {
    position: absolute;
    top: 138px;
    height: 33px;
    line-height: 31px;
    text-align: center;
    background-color: #e1e1e1;
    border: 1px solid #adadad;
    color: #000;
}

.ctl-minus { left: 184px; width: 68px; }
.ctl-plus { left: 278px; width: 58px; }

.handle {
    position: absolute;
    width: 6px;
    height: 6px;
    background-color: #fff;
    border: 1px solid #333;
}

.h-right { left: 1066px; top: 302px; }
.h-bottom { left: 539px; top: 592px; }
.h-corner { left: 1066px; top: 592px; }

/* output */
.output {
    height: 189px;
    flex: none;
}

.output .panel-head {
    height: 30px;
    padding-left: 2px;
}

.out-tools {
    display: flex;
    align-items: center;
    height: 25px;
    padding-left: 7px;
}

.out-label {
    width: 121px;
    flex: none;
    color: #c8c8c8;
    white-space: nowrap;
}

.out-combo {
    display: flex;
    align-items: center;
    justify-content: space-between;
    width: 288px;
    height: 25px;
    padding: 0 6px 0 4px;
    background-color: #333;
    border: 1px solid #434343;
    flex: none;
}

.oi {
    width: 28px;
    height: 25px;
    color: #c8c8c8;
}

.oi.dim { color: #5c5c5c; }

.out-tools .sep { margin: 0 4px; }

.out-body {
    display: grid;
    grid-template-columns: 1fr 23px;
    grid-template-rows: 112px 19px;
}

.out-text {
    padding: 1px 0 0 13px;
    overflow: hidden;
    background-color: #1e1e1e;
    font-family: "Liberation Mono", "Noto Sans CJK SC", monospace;
    font-size: 13.330px;
    line-height: 18.500px;
    white-space: nowrap;
    color: #dcdcdc;
}

.out-text div {
    height: 18.500px;
}

.out-text .c {
    font-family: "Noto Sans CJK SC", sans-serif;
    font-size: 16px;
}

.out-vbar {
    display: flex;
    flex-direction: column;
    align-items: center;
    padding: 6px 0 8px;
    background-color: #2e2e2e;
}

.vthumb {
    width: 100%;
    height: 9px;
    margin-top: 50px;
    background: linear-gradient(#555 7px, #d0d0d0 7px);
}

.out-vbar svg:last-child {
    margin-top: 17px;
}

.out-hbar {
    display: flex;
    align-items: center;
    grid-column: 1 / 3;
    padding: 0 5px 0 5px;
    background-color: #2e2e2e;
}

.hthumb {
    width: 536px;
    height: 9px;
    margin-left: 7px;
    background-color: #555;
}

.hright {
    margin-left: auto;
    margin-right: 27px;
}

.bot-tabs {
    display: flex;
    align-items: flex-start;
    height: 25px;
    flex: none;
}

.btab {
    height: 25px;
    padding: 2px 5px;
    color: #a8a8a8;
    border: 1px solid transparent;
    white-space: nowrap;
}

.btab-on {
    margin-left: 2px;
    padding: 2px 6px;
    color: #f0f0f0;
    border-color: #3f3f3f;
    border-top-color: #1f1f1f;
}

/* right column */
.rightcol {
    display: flex;
    flex-direction: column;
    width: 434px;
    height: 904px;
    flex: none;
}

.solution {
    height: 274px;
    flex: none;
}

.sol-tools {
    display: flex;
    align-items: center;
    height: 33px;
    padding-left: 7px;
}

.si {
    width: 28px;
    height: 30px;
}

.sol-tools .sep { margin: 0 4px; }

.si-first { margin-right: 0; }
.si-box { width: 27px; height: 29px; border: 1px solid #6f5bd3; }
.si-box2 { margin-left: 4px; }

.search-sol {
    margin-top: 1px;
    height: 27px;
}

.sol-row {
    display: flex;
    align-items: center;
    height: 24px;
    white-space: nowrap;
}

.sol-row .ic {
    width: 18px;
    height: 18px;
    margin-right: 7px;
}

.sol-row .ic-w { width: 20px; height: 18px; margin-right: 6px; }

.sol-row b { color: #f0f0f0; }

.lv0 { padding-left: 18px; margin-top: 3px; }
.lv1 { padding-left: 15px; }
.lv1 .tw { margin-right: 19px; }
.lv1 .ic { margin-right: 5px; }
.lv2 { padding-left: 35px; }
.lv2 .tw { margin-right: 16px; }

.sol-sel {
    background-color: #383838;
}

.cs-ic {
    width: 20px;
    margin-right: 6px;
    color: #6dc36a;
    font: 700 15px/20px "Liberation Sans", sans-serif;
}

.side-tabs {
    display: flex;
    align-items: flex-start;
    height: 33px;
    flex: none;
    color: #a8a8a8;
    white-space: nowrap;
}

.stab {
    height: 25px;
    padding: 1px 6px;
    border: 1px solid transparent;
    line-height: 20px;
}

.stab-on {
    color: #f0f0f0;
    border-color: #3f3f3f;
    border-top-color: #1f1f1f;
}

.props {
    flex: 1;
    display: flex;
    flex-direction: column;
    min-height: 0;
}

.prop-obj {
    display: flex;
    align-items: center;
    height: 28px;
    flex: none;
    padding: 0 5px;
    background-color: #333;
}

.prop-obj b { color: #f0f0f0; margin-right: 10px; }

.prop-obj svg { margin-left: auto; }

.prop-tools {
    display: flex;
    align-items: center;
    height: 33px;
    flex: none;
    padding-left: 3px;
}

.pb {
    width: 29px;
    height: 28px;
}

.pb-on { border: 1px solid #6f5bd3; }
.pb-plain { margin-left: 3px; }
.prop-tools .sep { margin: 0 1px 0 3px; }

.prop-grid {
    display: flex;
    height: 427px;
    flex: none;
    overflow: hidden;
    background-color: #2d2d2d;
}

.prop-list {
    width: 410px;
    flex: none;
}

.pcat {
    display: flex;
    align-items: center;
    height: 23px;
    padding-left: 5px;
    font-weight: 700;
    color: #dcdcdc;
}

.pcat svg {
    width: 11px;
    height: 11px;
    margin-right: 8px;
}

.prow {
    position: relative;
    display: grid;
    grid-template-columns: 191px 202px;
    column-gap: 1px;
    height: 23px;
    margin-left: 16px;
    white-space: nowrap;
}

.prow span {
    height: 22px;
    padding-left: 4px;
    line-height: 22px;
    background-color: #1f1f1f;
    overflow: hidden;
}

.prow > span:first-of-type { padding-left: 5px; }

.prow-sel span:first-of-type { background-color: #333; }

.pexp {
    position: absolute;
    left: -14px;
    top: 5px;
    width: 11px;
    height: 11px;
}

.pbold {
    font-weight: 700;
    color: #f0f0f0;
}

.prow .pval-sw {
    display: flex;
    align-items: center;
    padding-left: 2px;
}

.sw {
    width: 23px;
    height: 18px;
    margin-right: 10px;
}

.sw-ctl { background-color: #f0f0f0; }
.sw-none { background-color: #1a1a1a; border: 1px solid #2b2b2b; }
.sw-blk { background-color: #000; }

.prop-bar {
    display: flex;
    flex-direction: column;
    align-items: center;
    width: 22px;
    padding-top: 7px;
}

.pthumb {
    width: 13px;
    height: 105px;
    margin-top: 237px;
    background-color: #555;
}

.prop-bar svg:last-child { margin-top: 55px; }

.prop-desc {
    flex: 1;
    padding: 8px 6px;
    border-top: 1px solid #3f3f3f;
}

.prop-desc b {
    display: block;
    color: #f0f0f0;
    margin-bottom: 3px;
}

.prop-desc p {
    margin: 0;
}

/* status bar */
.statusbar {
    display: flex;
    align-items: center;
    height: 30px;
    flex: none;
    padding-left: 5px;
    background-color: #404040;
    color: #e0e0e0;
}

.st-ready { margin-left: 10px; }

.st-right {
    display: flex;
    align-items: center;
    margin-left: auto;
    padding-right: 14px;
}

.st-pos { margin: 0 118px 0 3px; width: 58px; }
.st-size { margin: 0 48px 0 4px; }
.st-src { margin: 0 8px 0 12px; }
.st-repo { margin: 0 7px 0 20px; }
.st-repo-t { margin-right: 8px; }

.st-bell {
    position: relative;
    margin-left: 16px;
}

.st-badge {
    position: absolute;
    right: -3px;
    bottom: -5px;
    width: 14px;
    height: 16px;
    border-radius: 50%;
    background-color: #f08a98;
    color: #501018;
    font-size: 12px;
    line-height: 16px;
    text-align: center;
}

/* hover tooltip and the red box someone drew on the screenshot */
.tooltip {
    position: absolute;
    left: 711px;
    top: 80px;
    width: 199px;
    height: 31px;
    padding-left: 7px;
    background-color: #f1f2f7;
    border: 1px solid #767676;
    color: #444;
    line-height: 29px;
    white-space: nowrap;
}

.redbox {
    position: absolute;
    left: 676px;
    top: 28px;
    width: 81px;
    height: 66px;
    border: 3px solid #e01414;
}
```
